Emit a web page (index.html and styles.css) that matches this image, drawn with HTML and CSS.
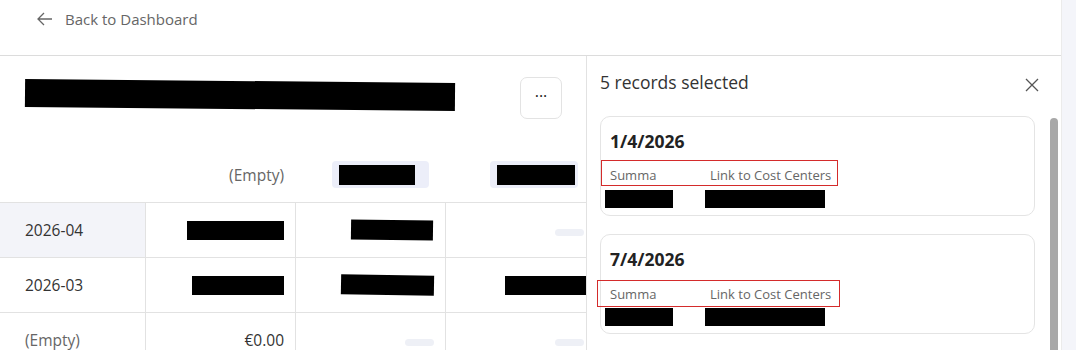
FILE: index.html
```html
<!DOCTYPE html>
<html lang="en">
  <head>
    <meta charset="UTF-8" />
    <meta name="viewport" content="width=device-width, initial-scale=1.0" />
    <title>Records</title>
    <link rel="stylesheet" href="styles.css">
  </head>
  <body>
    <div class="app">
      <!-- Top bar -->
      <div class="topbar">
        <a class="back-link" href="#">
          <svg width="16" height="14" viewBox="0 0 16 14" fill="none" stroke="#666" stroke-width="1.3">
            <path d="M15 7H1.5M7 1L1 7l6 6" />
          </svg>
          <span>Back to Dashboard</span>
        </a>
      </div>

      <div class="content">
        <!-- Pivot table -->
        <div class="main">
          <div class="title-row">
            <div class="title-redacted"></div>
            <button class="more-btn">&middot;&middot;&middot;</button>
          </div>

          <div class="grid head">
            <div class="cell"></div>
            <div class="cell muted">(Empty)</div>
            <div class="cell"><span class="chip"><span class="bar chip-bar-1"></span></span></div>
            <div class="cell"><span class="chip"><span class="bar chip-bar-2"></span></span></div>
          </div>

          <div class="grid row">
            <div class="cell first active">2026-04</div>
            <div class="cell"><span class="bar w97"></span></div>
            <div class="cell"><span class="bar w82 pad2"></span></div>
            <div class="cell"><span class="pill"></span></div>
          </div>
          <div class="grid row">
            <div class="cell first">2026-03</div>
            <div class="cell"><span class="bar w92"></span></div>
            <div class="cell"><span class="bar w93"></span></div>
            <div class="cell edge"><span class="bar w81"></span></div>
          </div>
          <div class="grid row">
            <div class="cell first muted">(Empty)</div>
            <div class="cell">€0.00</div>
            <div class="cell"><span class="pill"></span></div>
            <div class="cell"><span class="pill"></span></div>
          </div>
        </div>

        <!-- Selection panel -->
        <div class="panel">
          <div class="panel-head">
            <span class="panel-title">5 records selected</span>
            <svg class="close" width="14" height="14" viewBox="0 0 14 14" stroke="#555" stroke-width="1.3">
              <path d="M1 1l12 12M13 1L1 13" />
            </svg>
          </div>
          <div class="panel-body">
            <div class="cards">
              <div class="card">
                <div class="card-date">1/4/2026</div>
                <div class="labels">
                  <span class="label">Summa</span>
                  <span class="label">Link to Cost Centers</span>
                </div>
                <div class="values">
                  <span class="bar v1"></span>
                  <span class="bar v2"></span>
                </div>
              </div>
              <div class="card">
                <div class="card-date">7/4/2026</div>
                <div class="labels wide">
                  <span class="label">Summa</span>
                  <span class="label">Link to Cost Centers</span>
                </div>
                <div class="values">
                  <span class="bar v1"></span>
                  <span class="bar v2"></span>
                </div>
              </div>
              <div class="card"></div>
            </div>
            <div class="scrollbar"></div>
          </div>
        </div>
      </div>
    </div>
    <div class="gutter"></div>
  </body>
</html>
```

FILE: styles.css
```css
:root {
  --text: #333;
  --muted: #666;
  --line: #e2e2e2;
  --soft: #f3f4f9;
  --chip: #eceef9;
  --mark: #d42b2b;
}

body {
  margin: 0;
  display: flex;
  height: 350px;
  overflow: hidden;
  font-family: "Open Sans", "Noto Sans", sans-serif;
  color: var(--text);
  background: #fff;
}

.app {
  width: 1061px;
  border-right: 1px solid #ebebeb;
  display: flex;
  flex-direction: column;
  overflow: hidden;
}

.gutter {
  flex: 1;
  background: #f4f5fa;
}

/* top bar */
.topbar {
  height: 56px;
  flex-shrink: 0;
  box-sizing: border-box;
  border-bottom: 1px solid #dcdcdc;
}

.back-link {
  display: flex;
  align-items: center;
  gap: 13px;
  padding: 9px 0 0 37px;
  color: var(--muted);
  text-decoration: none;
  font-size: 15px;
}

.back-link span {
  margin-left: -1px;
}

.content {
  flex: 1;
  display: flex;
  min-height: 0;
}

/* left table */
.main {
  width: 586px;
  overflow: hidden;
  flex-shrink: 0;
}

.title-row {
  height: 84px;
  box-sizing: border-box;
  display: flex;
  justify-content: space-between;
  align-items: flex-start;
  padding: 21px 24px 0 25px;
}

.title-redacted {
  width: 430px;
  height: 28px;
  margin-top: 4px;
  background: #000;
  transform: rotate(0.5deg);
}

.more-btn {
  width: 42px;
  height: 42px;
  border: 1px solid #e3e3e3;
  border-radius: 7px;
  background: #fff;
  font-size: 16px;
  line-height: 1;
  color: #222;
  padding: 0 0 4px;
  font-family: inherit;
}

.grid {
  display: grid;
  grid-template-columns: 145px 150px 150px 150px;
  width: 600px;
}

.head {
  height: 62px;
  box-sizing: border-box;
  padding: 21px 0 14px;
}

.head .cell {
  height: 27px;
  padding-right: 11px;
}

.head .cell:nth-child(3) {
  padding-right: 16px;
}

.head .cell:nth-child(4) {
  padding-right: 17px;
}

.cell {
  display: flex;
  align-items: center;
  justify-content: flex-end;
  padding: 0 11px;
  font-size: 15.5px;
  box-sizing: border-box;
}

.row {
  height: 55px;
  border-top: 1px solid var(--line);
  box-sizing: border-box;
}

.row .cell {
  border-left: 1px solid var(--line);
}

.row .cell.first {
  border-left: none;
  justify-content: flex-start;
  padding-left: 25px;
}

.row .cell.edge {
  padding-right: 9px;
}

.active {
  background: var(--soft);
}

.muted {
  color: var(--muted);
}

.chip {
  display: flex;
  align-items: center;
  height: 27px;
  padding: 0 3px 0 7px;
  background: var(--chip);
  border-radius: 4px;
}

.bar {
  display: inline-block;
  background: #000;
  height: 19px;
}

.chip-bar-1 { width: 76px; height: 20px; margin-right: 11px; }
.chip-bar-2 { width: 78px; height: 20px; }

.w97 { width: 97px; }
.w82 { width: 82px; height: 20px; transform: rotate(0.8deg); }
.w92 { width: 92px; }
.w93 { width: 93px; height: 20px; transform: rotate(1deg); }
.w81 { width: 81px; }
.pad2 { margin-right: 1px; }

.pill {
  width: 29px;
  height: 7px;
  border-radius: 4px;
  background: #eef0f6;
  margin-top: 4px;
}

/* right panel */
.panel {
  flex: 1;
  border-left: 1px solid var(--line);
  display: flex;
  flex-direction: column;
  min-width: 0;
}

.panel-head {
  height: 60px;
  flex-shrink: 0;
  box-sizing: border-box;
  display: flex;
  justify-content: space-between;
  align-items: flex-start;
  padding: 14px 22px 0 13px;
}

.panel-title {
  font-size: 17.5px;
  color: var(--text);
}

.close {
  margin-top: 8px;
}

.panel-body {
  flex: 1;
  display: flex;
  padding-left: 13px;
  min-height: 0;
  overflow: hidden;
}

.cards {
  width: 435px;
  display: flex;
  flex-direction: column;
  gap: 18px;
}

.card {
  height: 100px;
  flex-shrink: 0;
  box-sizing: border-box;
  border: 1px solid #e4e4e4;
  border-radius: 10px;
  padding: 12px 9px 0;
}

.card-date {
  font-size: 17.5px;
  font-weight: 700;
  color: #222;
  line-height: 24px;
}

.labels {
  display: flex;
  width: 237px;
  height: 26px;
  box-sizing: border-box;
  border: 1px solid var(--mark);
  align-items: center;
  margin: 7px 0 0 -9px;
  padding: 3px 0 0 8px;
}

.labels.wide {
  width: 243px;
  margin-left: -13px;
  padding: 1px 0 0 12px;
  height: 27px;
  margin-top: 9px;
}

.label {
  font-size: 13px;
  color: var(--muted);
}

.label:first-child {
  width: 100px;
}

.values {
  display: flex;
  align-items: center;
  gap: 32px;
  margin: 4px 0 0 -5px;
}

.labels.wide + .values {
  margin-top: 1px;
}

.v1 { width: 68px; height: 18px; }
.v2 { width: 120px; height: 18px; }

.scrollbar {
  width: 8px;
  margin: 2px 0 0 15px;
  background: #a8a8a8;
  border-radius: 4px 4px 0 0;
}
```
